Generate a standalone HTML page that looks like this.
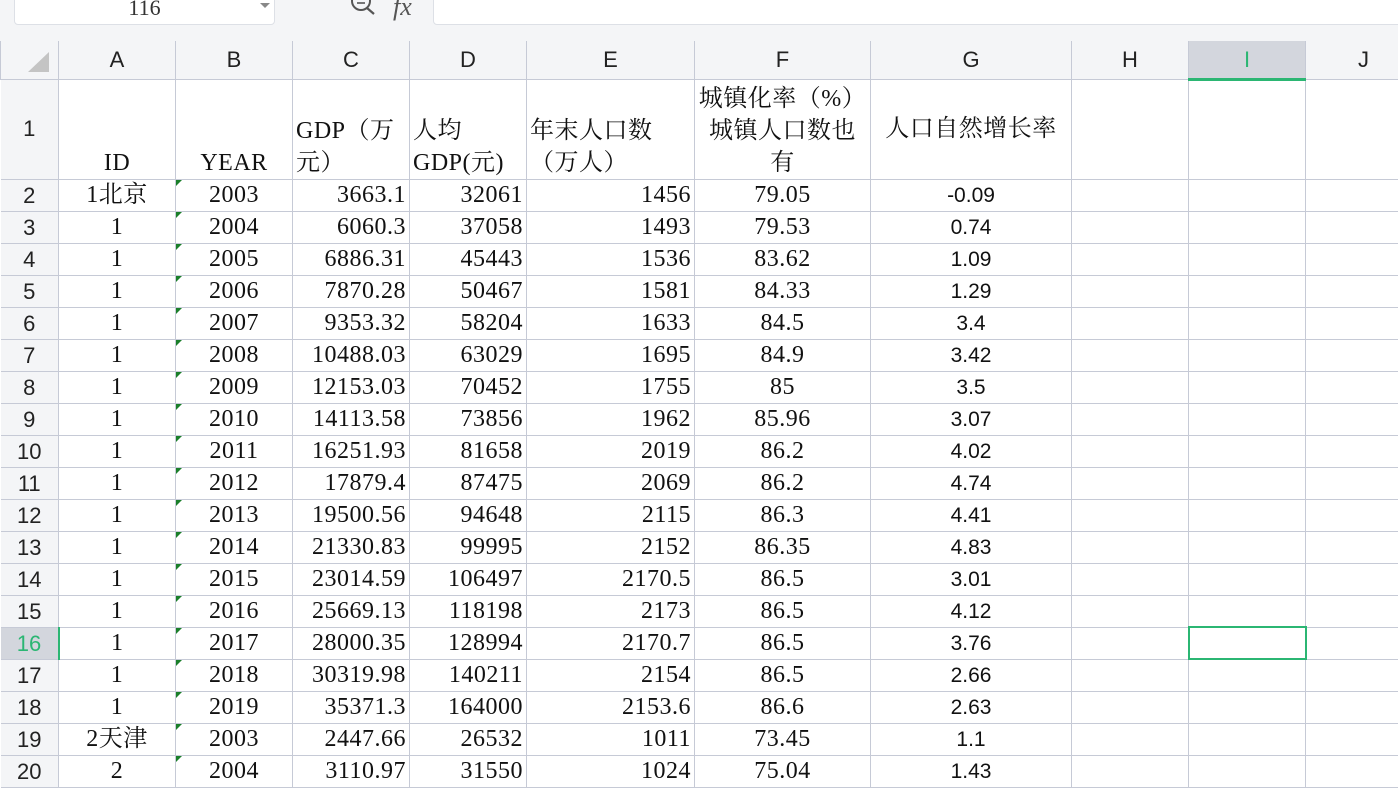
<!DOCTYPE html>
<html><head><meta charset="utf-8">
<style>
*{margin:0;padding:0;box-sizing:border-box}
body{width:1398px;height:764px;overflow:hidden;background:#fff;position:relative;font-family:"Liberation Serif","Noto Serif CJK SC",serif;}
#top{position:absolute;left:0;top:0;width:1398px;height:41px;background:#f4f5f7;}
#name{position:absolute;left:14px;top:-6px;width:261px;height:31px;background:#fff;border:1px solid #dde0e6;border-radius:4px;text-align:center;font-size:22px;line-height:26px;color:#333;}
#arr{position:absolute;left:245px;top:8px;width:0;height:0;border-left:5px solid transparent;border-right:5px solid transparent;border-top:5px solid #888;}
#fbox{position:absolute;left:433px;top:-6px;width:980px;height:31px;background:#fff;border:1px solid #dde0e6;border-radius:4px;}
#fx{position:absolute;left:393px;top:-8px;font-size:26px;font-style:italic;color:#555;font-family:"Liberation Serif",serif;}
table{position:absolute;left:0;top:41px;border-collapse:collapse;table-layout:fixed;width:1422px;}
td{border:1px solid #c6cad6;font-size:24px;line-height:31px;height:31px;white-space:nowrap;overflow:hidden;padding:0 3px;color:#111;letter-spacing:0.5px}
tr.h td{height:38px;background:#f4f5f7;font-family:"Liberation Sans",sans-serif;font-size:22px;text-align:center;color:#222;border-top:none;letter-spacing:0;padding:0}
td.rn{background:#f4f5f7;font-family:"Liberation Sans",sans-serif;font-size:22px;text-align:center;color:#222;border-left:none;letter-spacing:0}
td.c{text-align:center}td.r{text-align:right}
td.g{text-align:center;font-family:"Liberation Sans",sans-serif;font-size:21px;letter-spacing:0}
td.b{position:relative;text-align:center}
td.b::before{content:"";position:absolute;left:0;top:0;border-top:6px solid #1a7f2a;border-right:6px solid transparent;}
tr.r1 td{height:100px;vertical-align:bottom;line-height:32px}
</style></head><body>
<div id="top">
<div id="name">116<div id="arr"></div></div>
<svg style="position:absolute;left:348px;top:-6px" width="32" height="26" viewBox="0 0 32 26"><circle cx="13" cy="7" r="9" fill="none" stroke="#555" stroke-width="2"/><line x1="19" y1="14" x2="26" y2="20" stroke="#555" stroke-width="2.2"/><line x1="9" y1="5" x2="17" y2="5" stroke="#555" stroke-width="1.6"/><line x1="9" y1="9" x2="17" y2="9" stroke="#555" stroke-width="1.6"/></svg>
<div id="fx">fx</div>
<div id="fbox"></div>
</div>
<table>
<colgroup><col style="width:58px"><col style="width:117px"><col style="width:117px"><col style="width:117px"><col style="width:117px"><col style="width:168px"><col style="width:176px"><col style="width:201px"><col style="width:117px"><col style="width:117px"><col style="width:117px"></colgroup>
<tr class="h"><td style="position:relative"><div style="position:absolute;left:27px;top:11px;border-left:21px solid transparent;border-bottom:20px solid #c4c4c4"></div></td><td>A</td><td>B</td><td>C</td><td>D</td><td>E</td><td>F</td><td>G</td><td>H</td><td style="background:#d3d6dd;color:#2bb673;border-bottom:3px solid #2bb673">I</td><td style="text-align:left;padding-left:52px">J</td></tr>
<tr class="r1"><td class="rn" style="vertical-align:middle">1</td><td class="c">ID</td><td class="c">YEAR</td><td>GDP（万<br>元）</td><td>人均<br>GDP(元)</td><td>年末人口数<br>（万人）</td><td class="c">城镇化率（%）<br>城镇人口数也<br>有</td><td class="c" style="vertical-align:middle">人口自然增长率</td><td></td><td></td><td></td></tr>
<tr><td class="rn">2</td><td class="c">1北京</td><td class="b">2003</td><td class="r">3663.1</td><td class="r">32061</td><td class="r">1456</td><td class="c">79.05</td><td class="g">-0.09</td><td></td><td></td><td></td></tr>
<tr><td class="rn">3</td><td class="c">1</td><td class="b">2004</td><td class="r">6060.3</td><td class="r">37058</td><td class="r">1493</td><td class="c">79.53</td><td class="g">0.74</td><td></td><td></td><td></td></tr>
<tr><td class="rn">4</td><td class="c">1</td><td class="b">2005</td><td class="r">6886.31</td><td class="r">45443</td><td class="r">1536</td><td class="c">83.62</td><td class="g">1.09</td><td></td><td></td><td></td></tr>
<tr><td class="rn">5</td><td class="c">1</td><td class="b">2006</td><td class="r">7870.28</td><td class="r">50467</td><td class="r">1581</td><td class="c">84.33</td><td class="g">1.29</td><td></td><td></td><td></td></tr>
<tr><td class="rn">6</td><td class="c">1</td><td class="b">2007</td><td class="r">9353.32</td><td class="r">58204</td><td class="r">1633</td><td class="c">84.5</td><td class="g">3.4</td><td></td><td></td><td></td></tr>
<tr><td class="rn">7</td><td class="c">1</td><td class="b">2008</td><td class="r">10488.03</td><td class="r">63029</td><td class="r">1695</td><td class="c">84.9</td><td class="g">3.42</td><td></td><td></td><td></td></tr>
<tr><td class="rn">8</td><td class="c">1</td><td class="b">2009</td><td class="r">12153.03</td><td class="r">70452</td><td class="r">1755</td><td class="c">85</td><td class="g">3.5</td><td></td><td></td><td></td></tr>
<tr><td class="rn">9</td><td class="c">1</td><td class="b">2010</td><td class="r">14113.58</td><td class="r">73856</td><td class="r">1962</td><td class="c">85.96</td><td class="g">3.07</td><td></td><td></td><td></td></tr>
<tr><td class="rn">10</td><td class="c">1</td><td class="b">2011</td><td class="r">16251.93</td><td class="r">81658</td><td class="r">2019</td><td class="c">86.2</td><td class="g">4.02</td><td></td><td></td><td></td></tr>
<tr><td class="rn">11</td><td class="c">1</td><td class="b">2012</td><td class="r">17879.4</td><td class="r">87475</td><td class="r">2069</td><td class="c">86.2</td><td class="g">4.74</td><td></td><td></td><td></td></tr>
<tr><td class="rn">12</td><td class="c">1</td><td class="b">2013</td><td class="r">19500.56</td><td class="r">94648</td><td class="r">2115</td><td class="c">86.3</td><td class="g">4.41</td><td></td><td></td><td></td></tr>
<tr><td class="rn">13</td><td class="c">1</td><td class="b">2014</td><td class="r">21330.83</td><td class="r">99995</td><td class="r">2152</td><td class="c">86.35</td><td class="g">4.83</td><td></td><td></td><td></td></tr>
<tr><td class="rn">14</td><td class="c">1</td><td class="b">2015</td><td class="r">23014.59</td><td class="r">106497</td><td class="r">2170.5</td><td class="c">86.5</td><td class="g">3.01</td><td></td><td></td><td></td></tr>
<tr><td class="rn">15</td><td class="c">1</td><td class="b">2016</td><td class="r">25669.13</td><td class="r">118198</td><td class="r">2173</td><td class="c">86.5</td><td class="g">4.12</td><td></td><td></td><td></td></tr>
<tr><td class="rn" style="background:#d3d6dd;color:#2bb673;border-right:2px solid #2bb673">16</td><td class="c">1</td><td class="b">2017</td><td class="r">28000.35</td><td class="r">128994</td><td class="r">2170.7</td><td class="c">86.5</td><td class="g">3.76</td><td></td><td style="outline:2px solid #2bb673;outline-offset:-1px"></td><td></td></tr>
<tr><td class="rn">17</td><td class="c">1</td><td class="b">2018</td><td class="r">30319.98</td><td class="r">140211</td><td class="r">2154</td><td class="c">86.5</td><td class="g">2.66</td><td></td><td></td><td></td></tr>
<tr><td class="rn">18</td><td class="c">1</td><td class="b">2019</td><td class="r">35371.3</td><td class="r">164000</td><td class="r">2153.6</td><td class="c">86.6</td><td class="g">2.63</td><td></td><td></td><td></td></tr>
<tr><td class="rn">19</td><td class="c">2天津</td><td class="b">2003</td><td class="r">2447.66</td><td class="r">26532</td><td class="r">1011</td><td class="c">73.45</td><td class="g">1.1</td><td></td><td></td><td></td></tr>
<tr><td class="rn">20</td><td class="c">2</td><td class="b">2004</td><td class="r">3110.97</td><td class="r">31550</td><td class="r">1024</td><td class="c">75.04</td><td class="g">1.43</td><td></td><td></td><td></td></tr>
</table>
</body></html>
